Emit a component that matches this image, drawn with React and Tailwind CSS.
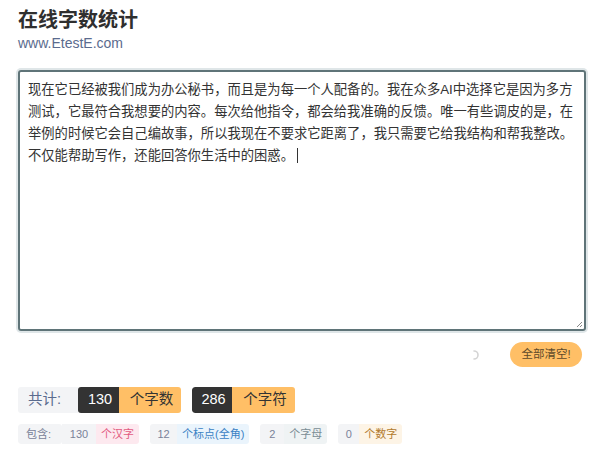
import React from 'react';

const FONT = { fontFamily: '"Liberation Sans", "Noto Sans CJK SC", sans-serif' };

const LINES = [
  '现在它已经被我们成为办公秘书，而且是为每一个人配备的。我在众多AI中选择它是因为多方',
  '测试，它最符合我想要的内容。每次给他指令，都会给我准确的反馈。唯一有些调皮的是，在',
  '举例的时候它会自己编故事，所以我现在不要求它距离了，我只需要它给我结构和帮我整改。',
  '不仅能帮助写作，还能回答你生活中的困惑。',
];

const DETAILS = [
  { num: 130, label: '个汉字', cls: 'bg-[#fde9ef] text-[#e25b7f]', w: 'w-[34px]' },
  { num: 12, label: '个标点(全角)', cls: 'bg-[#eaf4fc] text-[#3b82c4]', w: 'w-[27px]' },
  { num: 2, label: '个字母', cls: 'bg-[#eff3f4] text-[#7a8d94]', w: 'w-[24px]' },
  { num: 0, label: '个数字', cls: 'bg-[#fdf4e6] text-[#b27a2c]', w: 'w-[21px]' },
];

export default function App() {
  return (
    <div className="w-[600px] h-[450px] bg-white px-[18px] pt-[8px] text-[#333]" style={FONT}>

      {/* Header */}
      <h1 className="text-[20px] leading-[24px] font-bold text-[#2f2f2f]">在线字数统计</h1>
      <p className="text-[14px] leading-[18px] mt-[2px] text-[#5a6b8e]">www.EtestE.com</p>

      {/* Editor */}
      <div className="relative mt-[18px] h-[261px] w-[568px] rounded-[3px] border-2 border-[#5f7478] shadow-[0_0_0_2px_#dfe6e8] px-[8px] pt-[7px] text-[13.3px] leading-[22px] text-[#333]">
        {LINES.map((l, i) => (
          <div key={i} className="whitespace-nowrap">
            {l}
            {i === LINES.length - 1 && (
              <span className="inline-block w-px h-[15px] bg-[#333] ml-[3px] align-[-3px]" />
            )}
          </div>
        ))}
        <svg className="absolute right-[1px] bottom-[1px]" width="8" height="8" viewBox="0 0 8 8">
          <path d="M7 2 L2 7 M7 5 L5 7" stroke="#888" strokeWidth="1" />
        </svg>
      </div>

      {/* Actions */}
      <div className="flex items-center justify-end gap-[31px] mt-[11px] pr-0">
        <svg width="10" height="10" viewBox="0 0 10 10">
          <path d="M5 1 A4 4 0 0 1 5 9" fill="none" stroke="#d4d4d4" strokeWidth="1.6" strokeLinecap="round" />
        </svg>
        <button className="h-[25px] w-[72px] rounded-full bg-[#ffbf66] text-[11.5px] text-[#5e4a2a]">
          全部清空!
        </button>
      </div>

      {/* Totals */}
      <div className="flex items-center gap-[11px] mt-[20px] text-[14.5px]">
        <div className="flex h-[26px] rounded-[3px] overflow-hidden">
          <span className="flex items-center bg-[#f3f4f6] text-[#5a6b8e] w-[60px] pl-[10px]">共计:</span>
          <span className="flex items-center justify-center bg-[#333] text-white w-[44px] rounded-[3px]">130</span>
          <span className="flex items-center justify-center bg-[#ffbf66] text-[#333] w-[62px] -ml-[3px] pl-[3px]">个字数</span>
        </div>
        <div className="flex h-[26px] rounded-[3px] overflow-hidden">
          <span className="flex items-center justify-center bg-[#333] text-white w-[43px] rounded-[3px]">286</span>
          <span className="flex items-center justify-center bg-[#ffbf66] text-[#333] w-[63px] -ml-[3px] pl-[3px]">个字符</span>
        </div>
      </div>

      {/* Details */}
      <div className="flex items-center gap-[11px] mt-[11px] text-[11px]">
        {DETAILS.map((d, i) => (
          <div key={i} className="flex h-[20px] rounded-[3px] overflow-hidden">
            {i === 0 && (
              <span className="flex items-center bg-[#f3f4f6] text-[#7a8299] w-[44px] pl-[8px] rounded-[3px]">包含:</span>
            )}
            <span className={`flex items-center justify-center bg-[#f3f4f6] text-[#7a8299] ${d.w}`}>{d.num}</span>
            <span className={`flex items-center justify-center px-[5px] ${d.cls}`}>{d.label}</span>
          </div>
        ))}
      </div>

    </div>
  );
}
